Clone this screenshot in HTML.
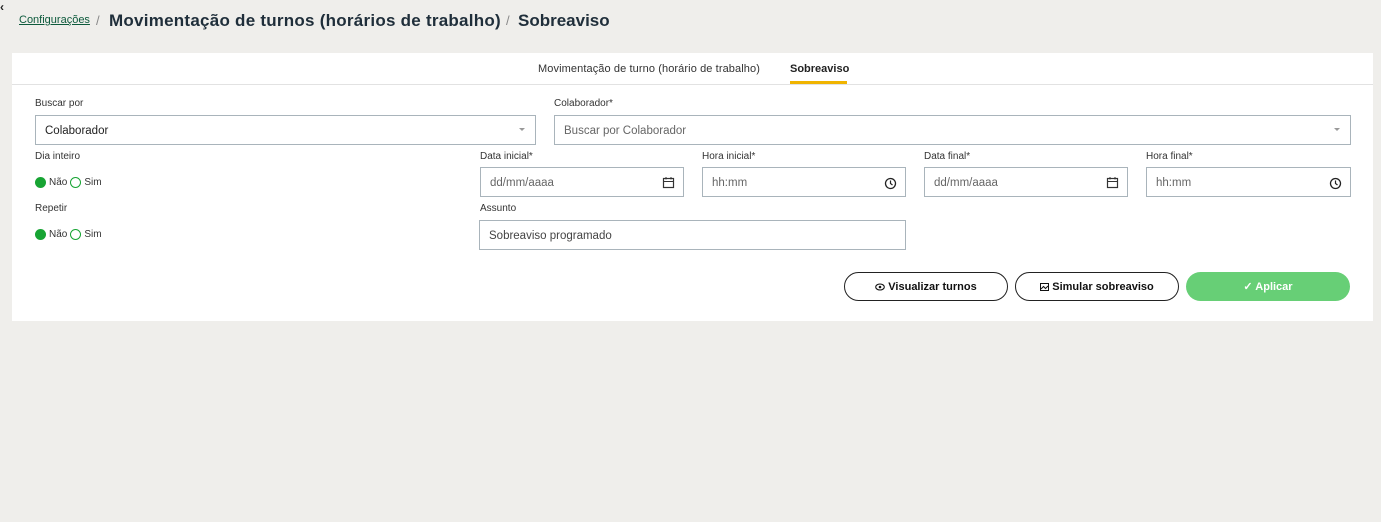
<!DOCTYPE html>
<html><head><meta charset="utf-8"><style>
body{margin:0;width:1381px;height:522px;background:#efeeeb;font-family:"Liberation Sans",sans-serif;position:relative;overflow:hidden;color:#222}
.a{position:absolute;white-space:nowrap}
.card{position:absolute;left:12px;top:53px;width:1361px;height:268px;background:#fff}
.lbl{position:absolute;font-size:10px;color:#333;margin-top:1px}
.in{position:absolute;box-sizing:border-box;border:1px solid #a9b4bb;background:#fff;font-size:11.5px;color:#666;padding-left:9px;padding-top:2px;display:flex;align-items:center}
.ic{position:absolute;right:8px;top:8px}
.rad{position:absolute;font-size:10px;color:#333;display:flex;align-items:center;margin-top:1px}
.dot{width:11px;height:11px;border-radius:50%;box-sizing:border-box;display:inline-block;margin-right:3px}
.on{background:#17a433}.off{border:1.3px solid #17a433;margin-left:3px}
.btn{position:absolute;top:272px;height:29px;width:164px;box-sizing:border-box;border:1px solid #222;border-radius:15px;font-size:11px;font-weight:bold;display:flex;align-items:center;justify-content:center;color:#111}
</style></head><body>
<div class="a" style="left:0;top:0;font-size:12px;font-weight:bold">&lsaquo;</div>
<div class="a" style="left:19px;top:14px;font-size:11px;color:#0d5a3c;text-decoration:underline">Configurações</div>
<div class="a" style="left:96px;top:13px;font-size:13px;color:#888">/</div>
<div class="a" style="left:109px;top:11px;font-size:17px;font-weight:bold;color:#1f2e3a;letter-spacing:0.25px">Movimentação de turnos (horários de trabalho)</div>
<div class="a" style="left:506px;top:13px;font-size:13px;color:#888">/</div>
<div class="a" style="left:518px;top:11px;font-size:17px;font-weight:bold;color:#1f2e3a">Sobreaviso</div>
<div class="card"></div>
<div class="a" style="left:12px;top:84px;width:1361px;height:1px;background:#e2e2e2"></div>
<div class="a" style="left:538px;top:63px;font-size:11px;color:#333;letter-spacing:0.1px">Movimentação de turno (horário de trabalho)</div>
<div class="a" style="left:790px;top:63px;font-size:11px;font-weight:bold;color:#222">Sobreaviso</div>
<div class="a" style="left:790px;top:81px;width:57px;height:3px;background:#f0b400"></div>

<div class="lbl" style="left:35px;top:97px">Buscar por</div>
<div class="in" style="left:35px;top:115px;width:501px;height:30px;color:#222">Colaborador<span style="position:absolute;right:10px;top:12px;border:3px solid transparent;border-top:3px solid #999"></span></div>
<div class="lbl" style="left:554px;top:97px">Colaborador*</div>
<div class="in" style="left:554px;top:115px;width:797px;height:30px">Buscar por Colaborador<span style="position:absolute;right:10px;top:12px;border:3px solid transparent;border-top:3px solid #999"></span></div>

<div class="lbl" style="left:35px;top:150px">Dia inteiro</div>
<div class="rad" style="left:35px;top:176px"><span class="dot on"></span>Não<span class="dot off"></span>Sim</div>
<div class="lbl" style="left:35px;top:202px">Repetir</div>
<div class="rad" style="left:35px;top:228px"><span class="dot on"></span>Não<span class="dot off"></span>Sim</div>

<div class="lbl" style="left:480px;top:150px">Data inicial*</div>
<div class="in" style="left:480px;top:167px;width:204px;height:30px">dd/mm/aaaa<svg class="ic" width="13" height="13" viewBox="0 0 13 13"><rect x="1.5" y="2.5" width="10" height="9" fill="none" stroke="#333" stroke-width="1.2"/><line x1="1.5" y1="5.5" x2="11.5" y2="5.5" stroke="#333"/><line x1="4" y1="1" x2="4" y2="3.5" stroke="#333"/><line x1="9" y1="1" x2="9" y2="3.5" stroke="#333"/></svg></div>
<div class="lbl" style="left:702px;top:150px">Hora inicial*</div>
<div class="in" style="left:702px;top:167px;width:204px;height:30px">hh:mm<svg class="ic" style="top:9px" width="13" height="13" viewBox="0 0 13 13"><circle cx="6.5" cy="6.5" r="5" fill="none" stroke="#222" stroke-width="1.3"/><path d="M6.5 3.5V6.5L8.5 8" fill="none" stroke="#222" stroke-width="1.2"/></svg></div>
<div class="lbl" style="left:924px;top:150px">Data final*</div>
<div class="in" style="left:924px;top:167px;width:204px;height:30px">dd/mm/aaaa<svg class="ic" width="13" height="13" viewBox="0 0 13 13"><rect x="1.5" y="2.5" width="10" height="9" fill="none" stroke="#333" stroke-width="1.2"/><line x1="1.5" y1="5.5" x2="11.5" y2="5.5" stroke="#333"/><line x1="4" y1="1" x2="4" y2="3.5" stroke="#333"/><line x1="9" y1="1" x2="9" y2="3.5" stroke="#333"/></svg></div>
<div class="lbl" style="left:1146px;top:150px">Hora final*</div>
<div class="in" style="left:1146px;top:167px;width:205px;height:30px">hh:mm<svg class="ic" style="top:9px" width="13" height="13" viewBox="0 0 13 13"><circle cx="6.5" cy="6.5" r="5" fill="none" stroke="#222" stroke-width="1.3"/><path d="M6.5 3.5V6.5L8.5 8" fill="none" stroke="#222" stroke-width="1.2"/></svg></div>

<div class="lbl" style="left:480px;top:202px">Assunto</div>
<div class="in" style="left:479px;top:220px;width:427px;height:30px;color:#444">Sobreaviso programado</div>

<div class="btn" style="left:844px"><svg width="10" height="8" viewBox="0 0 10 8" style="margin-right:3px"><ellipse cx="5" cy="4" rx="4.3" ry="3" fill="none" stroke="#111" stroke-width="1.1"/><circle cx="5" cy="4" r="1.3" fill="#111"/></svg>Visualizar turnos</div>
<div class="btn" style="left:1015px"><svg width="9" height="8" viewBox="0 0 9 8" style="margin-right:3px"><rect x="0.5" y="0.5" width="8" height="7" fill="none" stroke="#111"/><path d="M1 6L3.5 3.5L5.5 5.5L8 3" stroke="#111" fill="none"/></svg>Simular sobreaviso</div>
<div class="btn" style="left:1186px;border:none;background:#67cf76;color:#fff">✓ Aplicar</div>
</body></html>
